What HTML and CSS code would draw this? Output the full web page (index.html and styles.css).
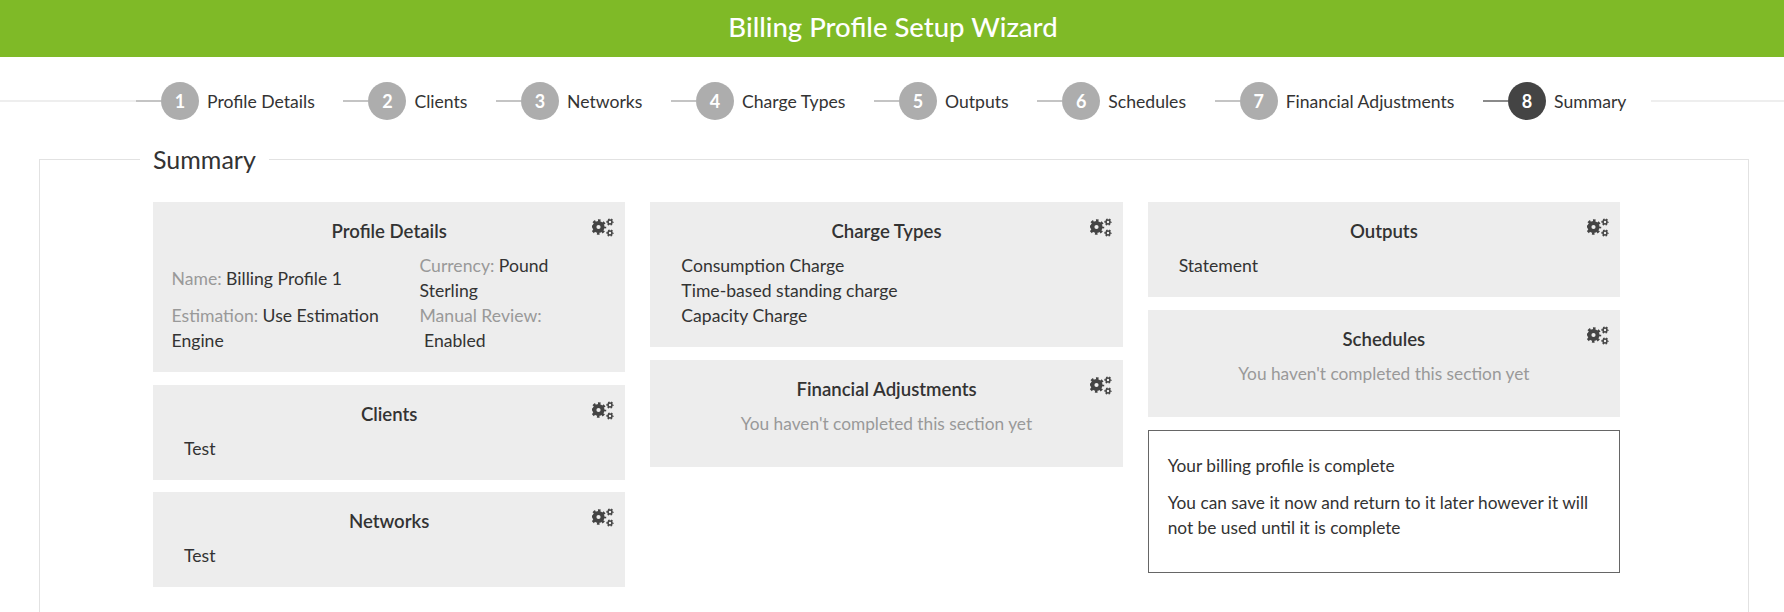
FILE: index.html
```html
<!DOCTYPE html>
<html lang="en">
<head>
<meta charset="utf-8">
<title>Billing Profile Setup Wizard</title>
<link rel="stylesheet" href="styles.css">
</head>
<body>
<svg class="defs" width="0" height="0" aria-hidden="true">
  <symbol id="cogs" viewBox="0 0 22 19">
    <circle cx="6.5" cy="9" r="4.1" fill="none" stroke="currentColor" stroke-width="4"/>
    <circle cx="6.5" cy="9" r="6.5" fill="none" stroke="currentColor" stroke-width="2.5" stroke-dasharray="2.55 2.55" stroke-dashoffset="1.27"/>
    <circle cx="18" cy="4" r="2" fill="none" stroke="currentColor" stroke-width="1.6"/>
    <circle cx="18" cy="4" r="3" fill="none" stroke="currentColor" stroke-width="1.3" stroke-dasharray="1.57 1.57" stroke-dashoffset="0.78"/>
    <circle cx="18" cy="15" r="2" fill="none" stroke="currentColor" stroke-width="1.6"/>
    <circle cx="18" cy="15" r="3" fill="none" stroke="currentColor" stroke-width="1.3" stroke-dasharray="1.57 1.57" stroke-dashoffset="0.78"/>
  </symbol>
</svg>
<header class="banner">Billing Profile Setup Wizard</header>
<nav class="wizard">
  <span class="rule"></span>
  <ol class="steps">
    <li class="step"><span class="link"></span><span class="num">1</span><span class="label">Profile Details</span></li>
    <li class="step"><span class="link"></span><span class="num">2</span><span class="label">Clients</span></li>
    <li class="step"><span class="link"></span><span class="num">3</span><span class="label">Networks</span></li>
    <li class="step"><span class="link"></span><span class="num">4</span><span class="label">Charge Types</span></li>
    <li class="step"><span class="link"></span><span class="num">5</span><span class="label">Outputs</span></li>
    <li class="step"><span class="link"></span><span class="num">6</span><span class="label">Schedules</span></li>
    <li class="step"><span class="link"></span><span class="num">7</span><span class="label">Financial Adjustments</span></li>
    <li class="step current"><span class="link"></span><span class="num">8</span><span class="label">Summary</span></li>
  </ol>
  <span class="rule"></span>
</nav>
<fieldset class="panel">
  <legend class="panel-title">Summary</legend>
  <div class="columns">
    <div class="column">
      <section class="card">
        <h3 class="card-title">Profile Details</h3>
        <svg class="cog"><use href="#cogs"/></svg>
        <div class="details">
          <div class="detail"><span class="key">Name:</span> Billing Profile 1</div>
          <div class="detail"><span class="key">Currency:</span> Pound Sterling</div>
          <div class="detail"><span class="key">Estimation:</span> Use Estimation Engine</div>
          <div class="detail"><span class="key">Manual Review:</span><br>&nbsp;Enabled</div>
        </div>
      </section>
      <section class="card">
        <h3 class="card-title">Clients</h3>
        <svg class="cog"><use href="#cogs"/></svg>
        <ul class="items"><li>Test</li></ul>
      </section>
      <section class="card">
        <h3 class="card-title">Networks</h3>
        <svg class="cog"><use href="#cogs"/></svg>
        <ul class="items"><li>Test</li></ul>
      </section>
    </div>
    <div class="column">
      <section class="card">
        <h3 class="card-title">Charge Types</h3>
        <svg class="cog"><use href="#cogs"/></svg>
        <ul class="items">
          <li>Consumption Charge</li>
          <li>Time-based standing charge</li>
          <li>Capacity Charge</li>
        </ul>
      </section>
      <section class="card">
        <h3 class="card-title">Financial Adjustments</h3>
        <svg class="cog"><use href="#cogs"/></svg>
        <p class="empty">You haven't completed this section yet</p>
      </section>
    </div>
    <div class="column">
      <section class="card">
        <h3 class="card-title">Outputs</h3>
        <svg class="cog"><use href="#cogs"/></svg>
        <ul class="items"><li>Statement</li></ul>
      </section>
      <section class="card">
        <h3 class="card-title">Schedules</h3>
        <svg class="cog"><use href="#cogs"/></svg>
        <p class="empty">You haven't completed this section yet</p>
      </section>
      <section class="notice">
        <p>Your billing profile is complete</p>
        <p>You can save it now and return to it later however it will not be used until it is complete</p>
      </section>
    </div>
  </div>
</fieldset>
</body>
</html>
```
FILE: styles.css
```css
* { box-sizing: border-box; }
html, body { height: 612px; overflow: hidden; }
body {
  margin: 0;
  background: #fff;
  color: #333;
  font-family: Lato, "Noto Sans", sans-serif;
  font-size: 17.6px;
  line-height: 25px;
}
.defs { position: absolute; }
.banner {
  height: 57px;
  padding-left: 2px;
  background: #7fba27;
  color: #fff;
  font-size: 27.5px;
  line-height: 53px;
  font-weight: 500;
  text-align: center;
}
.wizard {
  display: flex;
  align-items: center;
  height: 38px;
  margin-top: 25px;
}
.rule {
  flex: 1;
  height: 2px;
  background: #eee;
}
.rule:first-child { flex: 0 0 136px; }
.steps {
  display: flex;
  align-items: center;
  margin: 0;
  padding: 0 25px 0 0;
  list-style: none;
}
.step {
  display: flex;
  align-items: center;
  padding-right: 28.6px;
}
.step:last-child { padding-right: 0; }
.link {
  width: 25px;
  height: 2px;
  background: #c4c4c4;
}
.num {
  width: 38px;
  height: 38px;
  border-radius: 50%;
  background: #adadad;
  color: #fff;
  font-size: 18px;
  font-weight: 700;
  line-height: 38px;
  text-align: center;
}
.label {
  margin-left: 8px;
  white-space: nowrap;
}
.current .link { background: #8a8a8a; }
.current .num { background: #444; }
.panel {
  margin: 23px 35px 0 39px;
  padding: 27px 128px 0 113px;
  min-width: 0;
  height: 520px;
  border: 1px solid #e2e2e2;
}
.panel-title {
  padding: 0 13px;
  margin-left: -13px;
  font-size: 25px;
  line-height: 32px;
}
.columns {
  display: grid;
  grid-template-columns: repeat(3, 1fr);
  column-gap: 25px;
  align-items: start;
}
.column {
  display: flex;
  flex-direction: column;
  gap: 13px;
}
.column:first-child .card:last-child { margin-top: -1px; }
.card {
  position: relative;
  background: #ededed;
  padding: 15.5px 18.5px 19px;
}
.card-title {
  margin: 0 0 9.5px;
  font-size: 18.6px;
  line-height: 26px;
  font-weight: 600;
  text-align: center;
}
.cog {
  position: absolute;
  top: 16px;
  right: 11px;
  width: 22px;
  height: 19px;
  color: #444;
}
.details {
  display: grid;
  grid-template-columns: 248px 170px;
  align-items: center;
}
.key { color: #999; }
.items {
  margin: 0;
  padding: 0 0 0 12.5px;
  list-style: none;
}
.empty {
  margin: 0 0 12px;
  color: #999;
  font-size: 17.3px;
  text-align: center;
}
.notice {
  border: 1px solid #666;
  padding: 22px 18px 20px 19px;
  font-size: 17.3px;
}
.notice p { margin: 0 0 12px; }
```
